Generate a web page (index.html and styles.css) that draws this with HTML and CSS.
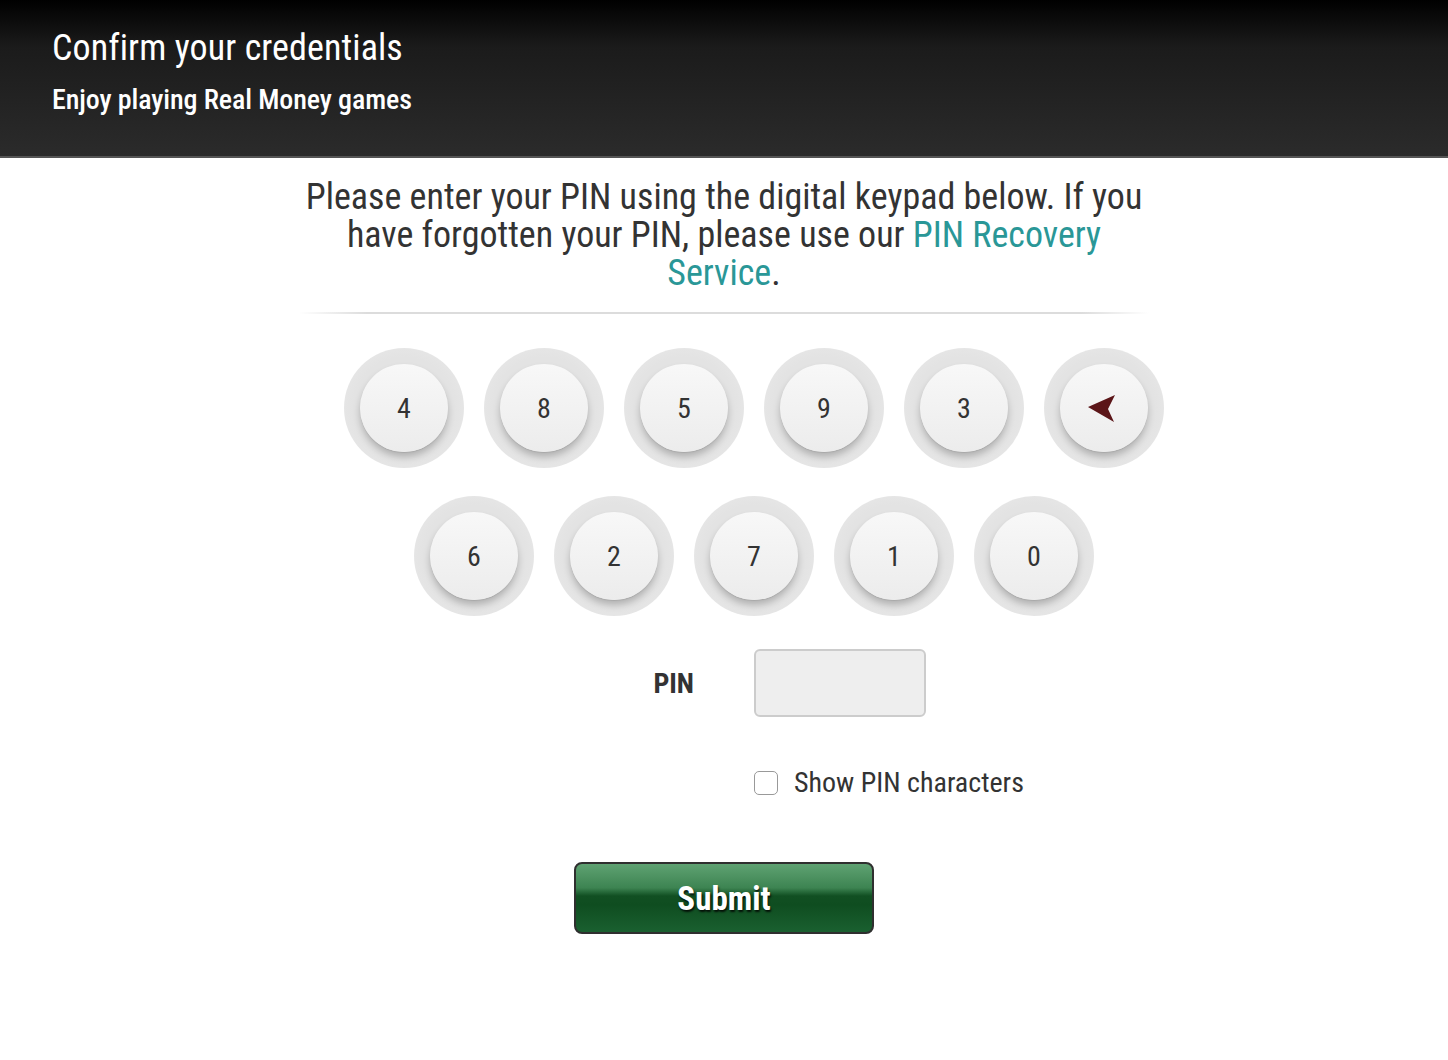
FILE: index.html
```html
<!DOCTYPE html>
<html lang="en">
<head>
<meta charset="utf-8">
<title>Confirm your credentials</title>
<link rel="stylesheet" href="styles.css">
</head>
<body>
<header class="top">
  <h1 class="top-title">Confirm your credentials</h1>
  <p class="top-sub">Enjoy playing Real Money games</p>
</header>
<main class="main">
  <p class="intro">Please enter your PIN using the digital keypad below. If you have forgotten your PIN, please use our <a class="link" href="#">PIN Recovery Service</a>.</p>
  <div class="divider"></div>
  <div class="keypad">
    <div class="row">
      <button class="key"><span class="cap">4</span></button>
      <button class="key"><span class="cap">8</span></button>
      <button class="key"><span class="cap">5</span></button>
      <button class="key"><span class="cap">9</span></button>
      <button class="key"><span class="cap">3</span></button>
      <button class="key"><span class="cap"><svg class="back" viewBox="0 0 30 30" width="30" height="30"><path d="M1 14 L28 2 L21 16 L27 29 Z" fill="#5b1518"/></svg></span></button>
    </div>
    <div class="row">
      <button class="key"><span class="cap">6</span></button>
      <button class="key"><span class="cap">2</span></button>
      <button class="key"><span class="cap">7</span></button>
      <button class="key"><span class="cap">1</span></button>
      <button class="key"><span class="cap">0</span></button>
    </div>
  </div>
  <div class="field">
    <label class="label">PIN</label>
    <div class="input"></div>
  </div>
  <div class="field check-row">
    <span></span>
    <label class="check"><span class="box"></span>Show PIN characters</label>
  </div>
  <div class="actions">
    <button class="submit">Submit</button>
  </div>
</main>
</body>
</html>
```
FILE: styles.css
```css
* { box-sizing: border-box; }
html, body { margin: 0; padding: 0; background: #fff; }
body {
  font-family: "Roboto Condensed", "Liberation Sans Narrow", "Roboto", sans-serif;
  font-stretch: condensed;
  color: #333;
}
.top {
  height: 158px;
  background: linear-gradient(#000 0%, #1b1b1b 30%, #2b2b2b 100%);
  border-bottom: 2px solid #555;
  padding: 26px 52px 0;
}
.top-title {
  margin: 0;
  color: #fff;
  font-size: 36px;
  font-weight: 400;
  line-height: 44px;
  letter-spacing: 0.1px;
}
.top-sub {
  margin: 13px 0 0;
  color: #fff;
  font-size: 28px;
  font-weight: 500;
  line-height: 34px;
  letter-spacing: -0.1px;
}
.main { padding-top: 20px; }
.intro {
  width: 860px;
  margin: 0 auto;
  text-align: center;
  font-size: 36px;
  line-height: 38px;
  color: #333;
}
.link { color: #2a9797; text-decoration: none; }
.divider {
  width: 850px;
  height: 2px;
  margin: 20px auto 0;
  background: linear-gradient(90deg, rgba(220,220,220,0), #dcdcdc 8%, #dcdcdc 92%, rgba(220,220,220,0));
}
.keypad {
  padding-left: 60px;
  margin-top: 34px;
  display: flex;
  flex-direction: column;
  gap: 28px;
}
.row { display: flex; justify-content: center; gap: 20px; }
.key {
  width: 120px;
  height: 120px;
  border-radius: 50%;
  border: 0;
  padding: 0;
  background: radial-gradient(circle at 50% 50%, #e3e3e3 60%, #ececec 100%);
  display: flex;
  align-items: center;
  justify-content: center;
  font-family: inherit;
}
.cap {
  width: 88px;
  height: 88px;
  border-radius: 50%;
  background: linear-gradient(#f8f8f8, #ececec);
  box-shadow: 0 5px 7px rgba(0,0,0,0.22), 0 1px 1px rgba(0,0,0,0.08);
  display: flex;
  align-items: center;
  justify-content: center;
  font-size: 28px;
  color: #333;
  font-stretch: condensed;
}
.back { display: block; margin-left: -4px; }
.field {
  display: grid;
  grid-template-columns: 1fr 1fr;
  column-gap: 60px;
  align-items: center;
  margin-top: 33px;
}
.label {
  text-align: right;
  font-size: 28px;
  font-weight: 700;
  color: #333;
}
.input {
  width: 172px;
  height: 68px;
  background: #eee;
  border: 2px solid #ccc;
  border-radius: 6px;
}
.check-row { margin-top: 49px; }
.check {
  display: flex;
  align-items: center;
  font-size: 28px;
  color: #333;
}
.box {
  width: 24px;
  height: 24px;
  border: 1.5px solid #999;
  border-radius: 5px;
  background: #fff;
  margin-right: 16px;
}
.actions { display: flex; justify-content: center; margin-top: 63px; }
.submit {
  width: 300px;
  height: 72px;
  border: 2px solid #2f2f2f;
  border-radius: 8px;
  background: linear-gradient(#5fa272 0%, #3d8452 35%, #114f22 47%, #0f4d20 60%, #1a6030 100%);
  color: #fff;
  font-family: inherit;
  font-stretch: condensed;
  font-size: 33px;
  font-weight: 700;
  text-shadow: 1px 2px 2px rgba(0,0,0,0.8);
  padding: 0;
}
```
